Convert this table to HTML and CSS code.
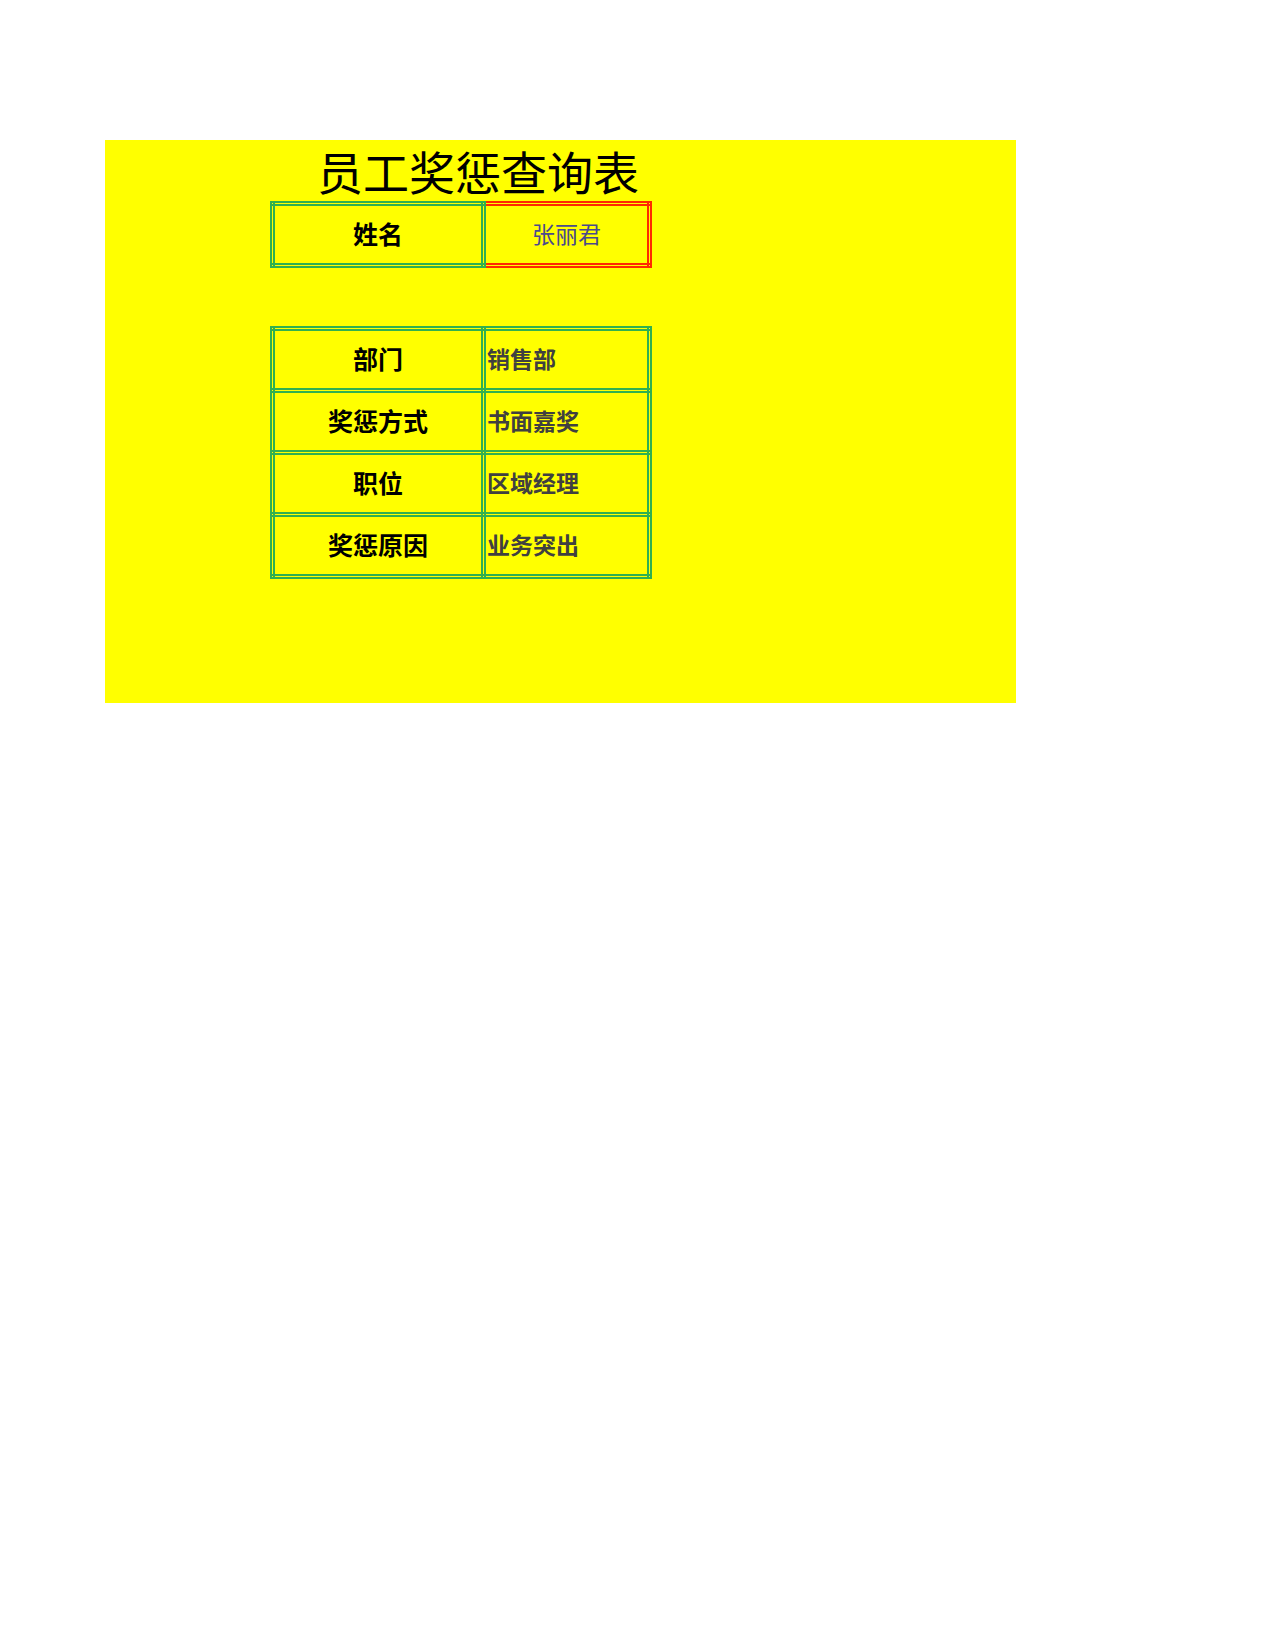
FILE: index.html
```html
<!DOCTYPE html>
<html lang="zh-CN">
<head>
<meta charset="utf-8">
<title>员工奖惩查询表</title>
<link rel="stylesheet" href="styles.css">
</head>
<body>
<div class="sheet">
  <div class="title">员工奖惩查询表</div>
  <table class="grid name-grid">
    <colgroup><col class="c1"><col class="c2"></colgroup>
    <tr>
      <td class="label">姓名</td>
      <td class="name-value">张丽君</td>
    </tr>
  </table>
  <table class="grid info-grid">
    <colgroup><col class="c1"><col class="c2"></colgroup>
    <tr><td class="label">部门</td><td class="value">销售部</td></tr>
    <tr><td class="label">奖惩方式</td><td class="value">书面嘉奖</td></tr>
    <tr><td class="label">职位</td><td class="value">区域经理</td></tr>
    <tr><td class="label">奖惩原因</td><td class="value">业务突出</td></tr>
  </table>
</div>
</body>
</html>
```

FILE: styles.css
```css
html, body {
  margin: 0;
  padding: 0;
  background: #ffffff;
}
body {
  font-family: "Noto Sans CJK SC", "Liberation Sans", sans-serif;
}
.sheet {
  margin-left: 105px;
  margin-top: 140px;
  width: 911px;
  height: 563px;
  background: #ffff00;
}
.title {
  padding-left: 212px;
  line-height: 61px;
  font-size: 46px;
  color: #000000;
  white-space: nowrap;
}
.grid {
  margin-left: 165px;
  width: 377px;
  border-collapse: collapse;
  table-layout: fixed;
}
.grid .c1 { width: 211px; }
.grid .c2 { width: 166px; }
.grid td {
  border: 5px double #30b050;
  padding: 0 0 3px 0;
  white-space: nowrap;
}
.name-grid td {
  height: 54px;
}
.info-grid {
  margin-top: 58px;
}
.info-grid td {
  height: 54px;
}
.label {
  text-align: center;
  font-weight: bold;
  font-size: 25px;
  color: #000000;
}
.grid td.name-value {
  border: 5px double #ff2a00;
  text-align: center;
  font-size: 23px;
  color: #4a4a8c;
}
.grid td.value {
  text-align: left;
  padding-left: 1px;
  font-weight: bold;
  font-size: 23px;
  color: #404040;
}
```
